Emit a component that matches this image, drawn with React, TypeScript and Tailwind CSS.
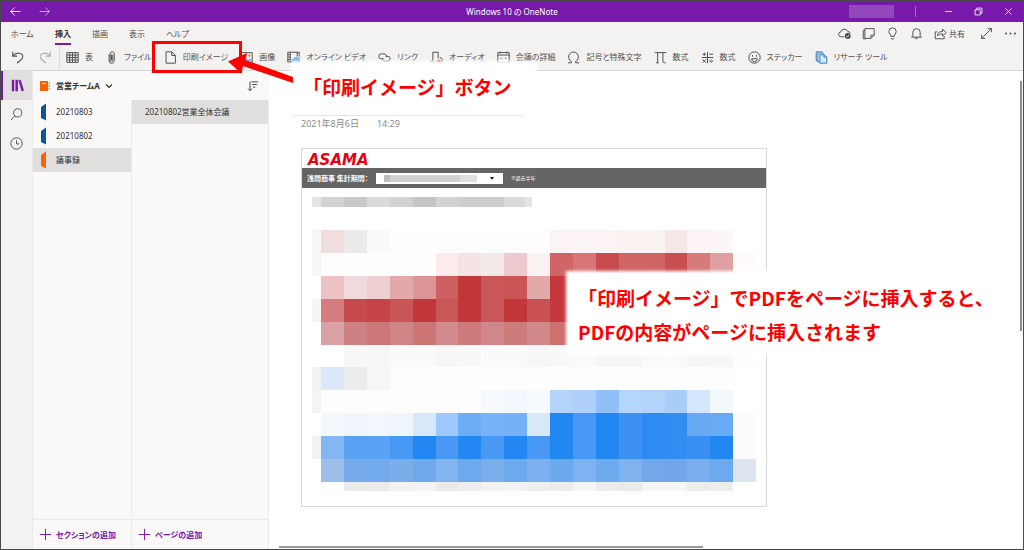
import React from 'react';

const tabs = ['ホーム', '挿入', '描画', '表示', 'ヘルプ'];

function Icon({ children, className = 'size-[13px]' }: { children: React.ReactNode; className?: string }) {
  return (
    <svg
      viewBox="0 0 16 16"
      className={`${className} shrink-0`}
      fill="none"
      stroke="currentColor"
      strokeWidth="1.2"
      aria-hidden="true"
    >
      {children}
    </svg>
  );
}

const tools = [
  {
    name: '表',
    icon: <path d="M1 2h14v12H1zM1 5h14M1 8h14M1 11h14M4.500 2v12M8 2v12M11.500 2v12" />,
  },
  {
    name: 'ファイル',
    icon: <path d="M5 4v8a3.200 3.200 0 0 0 6.400 0V3.500a2.500 2.500 0 0 0-5 0M6.400 3.500V11a1.600 1.600 0 0 0 3.200 0V4.500M8 4.500V11" />,
  },
  {
    name: '印刷イメージ',
    icon: <path d="M2.500 1h7l4.500 4.500V15H2.500zM9.500 1v4.500H14" />,
  },
  {
    name: '画像',
    icon: (
      <>
        <path d="M1 2h14v12H1z" />
        <path d="M1 14l5-6 4 4 2-2 3 3" stroke="#2b88d8" fill="#9ccbf0" />
        <circle cx="11.500" cy="5.500" r="1.500" stroke="none" fill="#e8903a" />
      </>
    ),
  },
  {
    name: 'オンライン ビデオ',
    icon: (
      <>
        <path d="M6 13.500H1v-12h14V7M4 1.500v12M1 4.500h3M1 7.500h3M1 10.500h3M12.500 1.500v5" />
        <path d="M8 14.500a2.500 2.500 0 0 1 0-5 3.500 3.500 0 0 1 6-1 3 3 0 0 1 1 6z" stroke="none" fill="#6fb3e8" />
      </>
    ),
  },
  {
    name: 'リンク',
    icon: <path d="M6.500 9.500H4a3 3 0 0 1 0-6h3.500a3 3 0 0 1 2.800 4M9.500 6.500H12a3 3 0 0 1 0 6H8.500a3 3 0 0 1-2.800-4" />,
  },
  {
    name: 'オーディオ',
    icon: (
      <>
        <path d="M3.500 12V1.500H10V9M1 11.500a1.500 1.500 0 1 0 2.500 0M6 13.500h2M12 8a3 3 0 0 1 3 3v3" />
        <circle cx="11" cy="13" r="2.500" stroke="none" fill="#e8525c" />
      </>
    ),
  },
  {
    name: '会議の詳細',
    icon: <path d="M1 2h14v12.500H1zM1 5h14M4 .5V3M12 .5V3M4.500 9h1.500M10 9h1.500" />,
  },
  {
    name: '記号と特殊文字',
    icon: <path d="M1 14.500h4.500v-1.500A6 6.200 0 1 1 10.500 13v1.500H15" />,
  },
  {
    name: '数式',
    icon: <path d="M1 2h14M4.500 2v12.500M11 2v11q0 1.500 2 1.500h1.500M2.500 14.500h3.500" />,
  },
  {
    name: '数式',
    icon: <path d="M8 1v14M1 8h14M2 4h4M4 2v4M10 4h5M2 10.500l4 4M6 10.500l-4 4M10 12.500h5M12.500 10v.8M12.500 14v.8" />,
  },
  {
    name: 'ステッカー',
    icon: (
      <>
        <circle cx="8" cy="8" r="7" />
        <path d="M4.500 9.500h7a3.500 3.500 0 0 1-7 0zM5.500 5v2M10.500 5v2" />
      </>
    ),
  },
  {
    name: 'リサーチ ツール',
    icon: (
      <g stroke="#2b80c8">
        <path d="M4 12H1.500V1H9M6 13.500H3.500v-11H11" />
        <path d="M6 4.500h5l3.500 3V15H6z" fill="#d6eafa" />
        <path d="M11 4.500v3h3.500" />
      </g>
    ),
  },
];

const sections = [
  { name: '20210803', color: 'text-[#0f5596]', active: false },
  { name: '20210802', color: 'text-[#0f5596]', active: false },
  { name: '議事録', color: 'text-[#f7630c]', active: true },
];

const titleStrip = [
  [0, 9, '#e6e6e6'],
  [9, 23, '#d3d3d3'],
  [32, 23, '#c9c9c9'],
  [55, 23, '#dadada'],
  [78, 23, '#d2d2d2'],
  [101, 23, '#c5c5c5'],
  [124, 23, '#d2d2d2'],
  [147, 23, '#cecece'],
  [170, 22, '#cecece'],
  [192, 21, '#dadada'],
  [213, 7, '#e4e4e4'],
] as const;

// One string per row; "-" leaves the cell white. The first column is narrower.
const heatmap = [
  'f7f7f7 f1dddd ebebeb f9f9f9 fdfdfd fdfdfd fdfdfd fdfdfd fdfdfd fdfdfd fdfdfd fbf4f4 fbf4f4 fbf4f4 fbf2f2 fbf2f2 f7e8e8 fcf4f4 fcf6f6 -',
  'f7f7f7 fdfdfd fdfdfd fdfdfd fdfdfd fdfdfd fbeceb f5e4e4 f3e9e7 eccacd fbf2f2 d06466 d67678 c84c4e d06567 d06466 c84e50 d67a7c e0a0a2 fdfbfb',
  '- ecc2c6 f1dadd eed0d2 e2a8aa dc9698 cd6062 c23739 c95759 c95557 e2a9aa c5383b c95759 c5383b c95759 c95759 c5383b c95759 c95759 -',
  'f5f5f5 d47c7e c64a4c c54547 c95557 c23739 c95759 c23739 c95759 c23739 c95153 c5383b c95759 c5383b c95759 c95759 c5383b c95759 c5383b -',
  '- d8a2a4 cf8082 cd7878 cf8486 cb7674 d28a8c cc7a7a d0868a cd7c7c d08888 cc7070 d0868a cc7a7a d0868a cd7c7c cc7a7a d0868a cd7c7c -',
  '- - f7f7f7 f7f7f7 fafafa fafafa f6f6f6 f8f8f8 fafafa fafafa f7f7f7 f8f8f8 fafafa f6f6f6 f6f6f6 fafafa fafafa f5f5f5 f7f7f7 fdfdfd',
  'f2f2f2 dae8fa ececec f6f6f6 fefefe fefefe fefefe fefefe fefefe fefefe fefefe fefefe fefefe fefefe fefefe fefefe fefefe fefefe fefefe -',
  'f4f4f4 fdfdfd fdfdfd fdfdfd fdfdfd fdfdfd fdfdfd fdfdfd f6fafd f1f7fd f7fafe b4d4fb afd0f8 90c0f8 b4d6fa b3d3f8 a8cef8 d4e6fb f3f8fd -',
  '- f3f8fd f1f6fd f1f7fd f0f5fb d6e8fa 9dc8f9 6cadf6 78b2f8 74b0f6 d8e9fa 2387f2 4797f4 2387f2 3c90f2 2f8af2 338cf2 68a9f4 68aaf6 fcfcfe',
  'f2f2f2 84b6f4 5ca2f4 5ca2f4 4797f4 2387f2 4898f4 2387f2 4898f4 2387f2 4898f4 2387f2 4797f4 2387f2 3c90f2 2f8af2 338cf2 3a8ff4 2387f2 fcfcfe',
  '- 9cbeea 75aaea 72aaec 7aaeea 6fa9ec 82b4f0 6ea9ee 7ab0ea 6caaee 7cb0ee 6ca8ec 7eb2f0 6eaaee 80b2f0 70a8ea 72a6e8 7aaeee 6ca9ee dde5f1',
  '- - eaeaea eaeaea f3f3f3 f3f3f3 eaeaea eeeeee f3f3f3 f3f3f3 eeeeee ececec f5f5f5 ececec eaeaea f6f6f6 f6f6f6 ececec eeeeee -',
].map((row) => row.split(' '));

const colX = (i: number) => (i === 0 ? 0 : Math.round(9 + (i - 1) * 22.9));
const rowY = (i: number) => (i === 12 ? 261 : Math.round(i * 22.9));

function TitleBar() {
  return (
    <div className="grid h-[21px] grid-cols-3 items-center bg-[#7719aa] text-white">
      <div className="flex items-center gap-4 pl-2">
        <button aria-label="戻る">
          <Icon>
            <path d="M2 8h12M7 3L2 8l5 5" />
          </Icon>
        </button>
        <button aria-label="進む" className="opacity-60">
          <Icon>
            <path d="M2 8h12M9 3l5 5-5 5" />
          </Icon>
        </button>
      </div>
      <h1 className="pt-px text-center">Windows 10 の OneNote</h1>
      <div className="flex items-center justify-end pr-[9px]">
        <span className="mr-[21px] h-[13px] w-[45px] bg-[#9147ba]" />
        <span className="mr-[27px] h-[11px] w-px bg-[#a566c8]" />
        <div className="flex gap-[19px]">
          <button aria-label="最小化">
            <Icon className="size-[11px]">
              <path d="M3 8h10" />
            </Icon>
          </button>
          <button aria-label="元に戻す">
            <Icon className="size-[11px]">
              <path d="M3 5.500h7.500V13H3zM5.500 5.500V3H13v7.500h-2.500" />
            </Icon>
          </button>
          <button aria-label="閉じる">
            <Icon className="size-[11px]">
              <path d="M3.500 3.500l9 9M12.500 3.500l-9 9" />
            </Icon>
          </button>
        </div>
      </div>
    </div>
  );
}

function TabRow() {
  return (
    <div className="flex h-[23px] items-center justify-between pl-[10px] pr-[6px]">
      <nav className="flex h-full gap-[21px]">
        {tabs.map((tab) => (
          <button
            key={tab}
            className={
              tab === '挿入'
                ? 'flex h-full items-center border-b-2 border-t-2 border-t-transparent border-[#7719aa] font-bold text-[#333]'
                : 'flex h-full items-center'
            }
          >
            {tab}
          </button>
        ))}
      </nav>
      <div className="flex items-center gap-[11px]">
        <button aria-label="同期">
          <Icon>
            <path d="M8 12H4a3 3 0 0 1-.5-6 4.500 4.500 0 0 1 8.500-.5 3 3 0 0 1 3 2" />
            <circle cx="12" cy="11" r="3.500" fill="#444" stroke="none" />
            <path d="M10.300 11l1.200 1.200 2.200-2.400" stroke="#fff" />
          </Icon>
        </button>
        <button aria-label="付箋">
          <Icon>
            <path d="M3.500 2H15v8l-4 4H3.500zM11 14v-4h4M3.500 4H1.500v10.500h3" />
          </Icon>
        </button>
        <button aria-label="ヒント">
          <Icon>
            <path d="M6 11.500C6 9 3.500 8.500 3.500 5.500a4.500 4.500 0 0 1 9 0c0 3-2.500 3.500-2.500 6zM6 14.500h4" />
          </Icon>
        </button>
        <button aria-label="通知">
          <Icon>
            <path d="M3.500 12V6.500a4.500 4.500 0 0 1 9 0V12M1.500 12.500h13M6.500 13a1.500 1.500 0 0 0 3 0" />
          </Icon>
        </button>
        <button className="flex items-center gap-[2px]">
          <Icon>
            <path d="M4 6H1.500v8.500h11V11M4.500 11c0-4 2-5.500 6-5.500V2.500L15 7l-4.500 4V8.500c-3 0-4.500.5-6 2.500z" />
          </Icon>
          共有
        </button>
        <button aria-label="全画面" className="ml-1">
          <Icon>
            <path d="M2 14L14 2M9.500 2H14v4.500M2 9.500V14h4.500" />
          </Icon>
        </button>
        <button aria-label="その他">
          <svg viewBox="0 0 13 13" className="size-[13px]" fill="currentColor" aria-hidden="true">
            <circle cx="2" cy="6.500" r="1" />
            <circle cx="6.500" cy="6.500" r="1" />
            <circle cx="11" cy="6.500" r="1" />
          </svg>
        </button>
      </div>
    </div>
  );
}

function ToolRow() {
  return (
    <div className="flex h-[26px] items-stretch border-b border-[#d8d7d6] pb-px pl-[10px]">
      <button aria-label="元に戻す">
        <Icon className="size-[14px]">
          <path d="M2 2v5h5M2.500 6.500C6 2 13.500 3 13.500 7.500c0 3-3 4-6.500 7.500" />
        </Icon>
      </button>
      <button aria-label="やり直し" className="ml-[13px] text-[#aaa]">
        <Icon className="size-[14px]">
          <path d="M14 2v5H9M13.500 6.500C10 2 2.500 3 2.500 7.500c0 3 3 4 6.500 7.500" />
        </Icon>
      </button>
      <span className="ml-[7px] mr-[6px] w-px bg-[#dcdbda]" />
      <div className="flex gap-3">
        {tools.map((tool, i) => (
          <button key={i} className="relative flex items-center gap-[6px] whitespace-nowrap">
            <Icon>{tool.icon}</Icon>
            {tool.name}
            {tool.name === '印刷イメージ' && <Marker />}
          </button>
        ))}
      </div>
    </div>
  );
}

function Marker() {
  return (
    <span className="absolute -bottom-1 -left-3 -right-[14px] -top-1 z-20 border-[3px] border-[#fe0000]">
      <svg viewBox="0 0 66 32" className="absolute -right-[55px] top-[8px] h-8 w-[66px]" fill="#fe0000" aria-hidden="true">
        <path d="M0 9.500L19 1l-1.500 7L65 25v6L15 14l-1.500 7.500z" />
      </svg>
    </span>
  );
}

function Rail() {
  return (
    <nav className="flex w-8 shrink-0 flex-col border-r border-[#eceae9] bg-[#f3f2f1] text-[#555]">
      <button
        aria-label="ノートブック"
        className="flex h-[29px] items-center justify-center border-l-2 border-[#7719aa] bg-[#e1dfdd] text-[#7719aa]"
      >
        <Icon>
          <path d="M2.500 1v14M7 1v14M10.500 1.500l4 13" strokeWidth="3" />
        </Icon>
      </button>
      <button aria-label="検索" className="flex h-[29px] items-center justify-center">
        <Icon>
          <circle cx="9.500" cy="6" r="5" />
          <path d="M6 9.500L1 15" />
        </Icon>
      </button>
      <button aria-label="最近使ったノート" className="flex h-[29px] items-center justify-center">
        <Icon>
          <circle cx="8" cy="8" r="7" />
          <path d="M8 4v4.500h3.500" />
        </Icon>
      </button>
    </nav>
  );
}

function AddButton({ label }: { label: string }) {
  return (
    <button className="flex h-[30px] items-center gap-1 border-t border-[#edebe9] pl-[6px] font-bold text-[#7719aa]">
      <Icon>
        <path d="M8 1v14M1 8h14" />
      </Icon>
      {label}
    </button>
  );
}

function Notebook() {
  return (
    <aside className="flex w-[236px] shrink-0 flex-col bg-[#faf9f8] text-[#333]">
      <div className="flex h-[29px] items-center justify-between pl-[6px] pr-[10px]">
        <button className="flex items-center gap-[5px] font-bold">
          <svg viewBox="0 0 12 12" className="size-3" aria-hidden="true">
            <path d="M1 1h8v10H1z" fill="#f7630c" />
            <path d="M9.500 2H11v2H9.500zM9.500 5H11v2H9.500zM9.500 8H11v2H9.500z" fill="#f9a26c" />
            <path d="M3 3.500h4" stroke="#fff" />
          </svg>
          営業チームA
          <Icon className="size-2">
            <path d="M2 5l6 6 6-6" strokeWidth="2.400" />
          </Icon>
        </button>
        <button aria-label="並べ替え">
          <Icon className="size-3">
            <path d="M4 2v12M1.500 11.500L4 14l2.500-2.500M6 2.500h9M7 6h6M8 9.500h3" />
          </Icon>
        </button>
      </div>
      <div className="flex flex-1">
        <div className="flex w-[99px] flex-col border-r border-[#edebe9]">
          <ul className="flex-1">
            {sections.map((section) => (
              <li key={section.name}>
                <button
                  className={`flex h-6 w-full items-center gap-[9px] pl-[7px] ${section.active ? 'bg-[#e1dfdd]' : ''}`}
                >
                  <svg viewBox="0 0 7 18" className={`h-[18px] w-[7px] ${section.color}`} aria-hidden="true">
                    <path d="M1 4l5-3.500v17L1 15z" fill="currentColor" />
                  </svg>
                  {section.name}
                </button>
              </li>
            ))}
          </ul>
          <AddButton label="セクションの追加" />
        </div>
        <div className="flex flex-1 flex-col border-r border-[#edebe9]">
          <div className="flex-1">
            <button className="flex h-6 w-full items-center bg-[#e1dfdd] pl-[13px]">20210802営業全体会議</button>
          </div>
          <AddButton label="ページの追加" />
        </div>
      </div>
    </aside>
  );
}

function Printout() {
  return (
    <section className="ml-8 mt-4 w-full max-w-[466px] border border-[#d9d9d9] bg-white">
      <div className="flex h-[19px] items-center px-[6px] pt-1 font-['DejaVu_Sans'] text-[15px] font-bold italic leading-none text-[#e60012]">
        ASAMA
      </div>
      <div className="flex h-5 items-center gap-2 bg-[#656565] pl-[5px] text-[7px] leading-none text-white">
        <label htmlFor="period" className="font-bold">
          浅間商事 集計期間：
        </label>
        <div className="relative h-[11px] w-[127px]">
          <select id="period" className="block h-full w-full appearance-none bg-white text-black">
            <option value=""></option>
          </select>
          <div className="pointer-events-none absolute inset-0 flex items-center pl-2">
            <span className="h-[7px] w-[6px] bg-[#bdbdbd]" />
            <span className="h-[7px] w-[70px] bg-[#d0d0d0]" />
            <span className="h-[7px] w-[17px] bg-[#dfdfdf]" />
            <svg viewBox="0 0 4 3" className="ml-[13px] h-[3px] w-1" aria-hidden="true">
              <path d="M0 0h4L2 3z" fill="#222" />
            </svg>
          </div>
        </div>
        <span className="text-[5px]">※過去半年</span>
      </div>
      <div className="px-[10px] pb-[15px] pt-[9px]">
        <svg viewBox="0 0 444 10" className="block w-full" shapeRendering="crispEdges" aria-hidden="true">
          {titleStrip.map(([x, w, fill]) => (
            <rect key={x} x={x} y="0" width={w} height="10" fill={fill} />
          ))}
        </svg>
        <svg viewBox="0 0 444 261" className="mt-[23px] block w-full" shapeRendering="crispEdges" aria-hidden="true">
          {heatmap.map((row, r) =>
            row.map((color, c) =>
              color === '-' ? null : (
                <rect
                  key={`${r}-${c}`}
                  x={colX(c)}
                  y={rowY(r)}
                  width={colX(c + 1) - colX(c)}
                  height={rowY(r + 1) - rowY(r)}
                  fill={`#${color}`}
                />
              ),
            ),
          )}
        </svg>
      </div>
    </section>
  );
}

export default function App() {
  return (
    <div className="flex min-h-screen flex-col overflow-hidden border border-[#4a4a4a] bg-white font-['Noto_Sans','Noto_Sans_CJK_JP',sans-serif] text-[8px] leading-3 text-[#505050] [font-feature-settings:'palt']">
      <header className="bg-[#f3f2f1]">
        <TitleBar />
        <TabRow />
        <ToolRow />
      </header>
      <div className="flex flex-1">
        <Rail />
        <Notebook />
        <main className="relative min-w-0 flex-1">
          <div className="ml-6 h-[45px] w-[230px] border-b border-[#e3e3e3]" />
          <div className="ml-8 flex h-4 items-center gap-[18px] text-[9px] text-[#8a8a8a]">
            <span>2021年8月6日</span>
            <span>14:29</span>
          </div>
          <Printout />

          <p className="absolute -top-2 left-6 z-10 h-12 w-[242px] bg-white pl-[10px] font-['Noto_Sans_CJK_JP',sans-serif] text-[19px] font-bold leading-[48px] text-[#fe0000] shadow-[0_0_3px_2px_white] [font-feature-settings:normal]">
            「印刷イメージ」ボタン
          </p>
          <p className="absolute left-[299px] top-[202px] z-10 whitespace-nowrap bg-white px-[10px] pb-1 pt-2 font-['Noto_Sans_CJK_JP',sans-serif] text-[19px] font-bold leading-[34px] text-[#fe0000] shadow-[0_0_3px_2px_white] [font-feature-settings:normal]">
            「印刷イメージ」でPDFをページに挿入すると、
            <br />
            PDFの内容がページに挿入されます
          </p>

          <span className="absolute right-px top-[10px] h-[250px] w-[2px] bg-[#8c8c8c]" />
          <span className="absolute bottom-px left-[10px] h-[2px] w-[424px] bg-[#9a9a9a]" />
        </main>
      </div>
    </div>
  );
}
